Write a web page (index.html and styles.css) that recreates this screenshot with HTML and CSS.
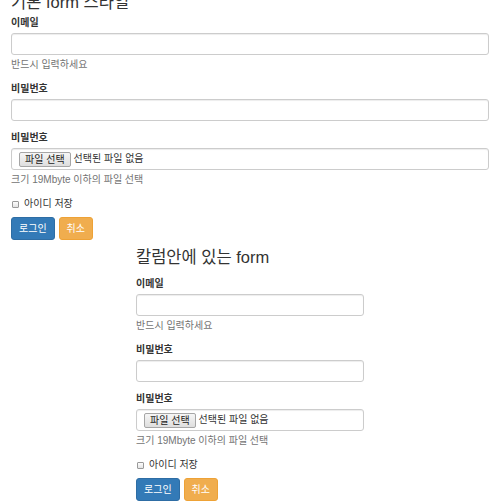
FILE: index.html
```html
<!DOCTYPE html>
<html lang="ko">
<head>
<meta charset="utf-8">
<title>form</title>
<link rel="stylesheet" href="styles.css">
</head>
<body>
<div class="container">
  <h3 class="title title-first">기본 form 스타일</h3>
  <form class="form">
    <div class="form-group">
      <label class="label">이메일</label>
      <div class="form-control"></div>
      <p class="help">반드시 입력하세요</p>
    </div>
    <div class="form-group">
      <label class="label">비밀번호</label>
      <div class="form-control"></div>
    </div>
    <div class="form-group">
      <label class="label">비밀번호</label>
      <div class="form-control file-control"><span class="file-btn">파일 선택</span><span class="file-name">선택된 파일 없음</span></div>
      <p class="help">크기 19Mbyte 이하의 파일 선택</p>
    </div>
    <div class="checkbox"><span class="check-box"></span><span>아이디 저장</span></div>
    <div class="buttons">
      <span class="btn btn-primary">로그인</span>
      <span class="btn btn-warning">취소</span>
    </div>
  </form>

  <div class="row">
    <div class="col">
      <h3 class="title title-second">칼럼안에 있는 form</h3>
      <form class="form">
        <div class="form-group">
          <label class="label">이메일</label>
          <div class="form-control"></div>
          <p class="help">반드시 입력하세요</p>
        </div>
        <div class="form-group">
          <label class="label">비밀번호</label>
          <div class="form-control"></div>
        </div>
        <div class="form-group">
          <label class="label">비밀번호</label>
          <div class="form-control file-control"><span class="file-btn">파일 선택</span><span class="file-name">선택된 파일 없음</span></div>
          <p class="help">크기 19Mbyte 이하의 파일 선택</p>
        </div>
        <div class="checkbox"><span class="check-box"></span><span>아이디 저장</span></div>
        <div class="buttons">
          <span class="btn btn-primary">로그인</span>
          <span class="btn btn-warning">취소</span>
        </div>
      </form>
    </div>
  </div>
  <div class="page-end"></div>
</div>
</body>
</html>
```
FILE: styles.css
```css
* { box-sizing: border-box; }
html, body { margin: 0; padding: 0; background: #fff; }
body {
  font-family: "Liberation Sans", "Noto Sans CJK KR", Arial, sans-serif;
  font-size: 10px;
  line-height: 14px;
  color: #333;
  overflow: hidden;
}
.container { padding: 0 11px; }
.title {
  font-size: 16.5px;
  line-height: 17px;
  font-weight: 400;
  color: #333;
  margin: 0;
}
.title-first { margin-top: -6px; margin-bottom: 5px; }
.title-second { margin-top: 9px; margin-bottom: 11px; }
.form { margin: 0; }
.form-group { margin-bottom: 10px; }
.label {
  display: block;
  font-weight: 700;
  margin-bottom: 3px;
}
.form-control {
  height: 22px;
  border: 1px solid #ccc;
  border-radius: 3px;
  background: #fff;
  box-shadow: inset 0 1px 1px rgba(0,0,0,.075);
}
.file-control {
  display: flex;
  align-items: center;
  padding: 0 7px;
}
.file-btn {
  height: 15px;
  line-height: 13px;
  padding: 0 5px;
  border: 1px solid #a6a6a6;
  border-radius: 2px;
  background: linear-gradient(#f6f6f6, #dedede);
  color: #222;
  margin-right: 3px;
}
.file-name { color: #333; }
.help {
  margin: 3px 0 0;
  color: #737373;
}
.checkbox {
  display: flex;
  align-items: center;
  gap: 5px;
  padding-left: 1px;
  margin-bottom: 6px;
}
.check-box {
  width: 7px;
  height: 7px;
  border: 1px solid #9a9a9a;
  border-radius: 1px;
  background: linear-gradient(#fdfdfd, #e4e4e4);
}
.buttons { display: flex; gap: 4px; }
.btn {
  display: inline-block;
  padding: 4px 7px;
  line-height: 13px;
  border: 1px solid transparent;
  border-radius: 3px;
  color: #fff;
  font-size: 10px;
}
.btn-primary { background: #337ab7; border-color: #2e6da4; }
.btn-warning { background: #f0ad4e; border-color: #eea236; }
.row { display: grid; grid-template-columns: 25% 50% 25%; margin: 0 -11px; }
.col { grid-column: 2; padding: 0 11px; }
.page-end { margin: 0 -11px; border-top: 1px solid #eee; }
```
